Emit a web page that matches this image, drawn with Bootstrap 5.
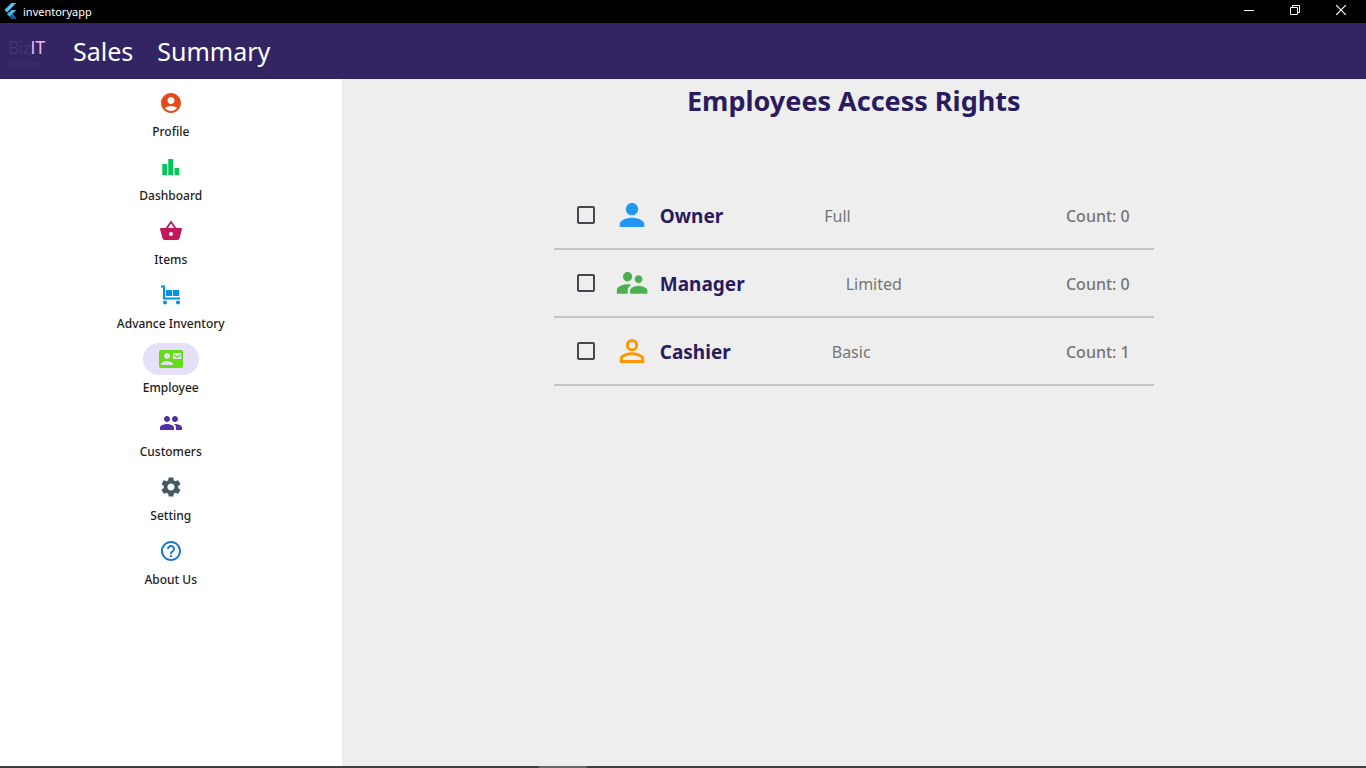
<!DOCTYPE html>
<html lang="en">
<head>
<meta charset="utf-8">
<meta name="viewport" content="width=device-width, initial-scale=1">
<title>inventoryapp</title>
<link href="https://cdn.jsdelivr.net/npm/bootstrap@5.3.0/dist/css/bootstrap.min.css" rel="stylesheet">
<style>
  body { font-family: "Noto Sans", "Open Sans", sans-serif; background: #eee; color: #1d1b20; }
  .window-bar { height: 23px; background: #000; color: #fff; font-size: 11px; line-height: 24px; padding: 0 2px 0 4px; }
  .window-bar .caption { width: 46px; height: 20px; line-height: 0; }
  .app-mark { margin: 3px 5px 0 0; }
  .app-bar { height: 56px; background: #332464; color: #fff; }
  .app-title { font-size: 25px; line-height: 32px; font-weight: 400; gap: 24px; }
  .brand-logo { width: 57px; font-size: 17px; line-height: 20px; font-family: Lato, sans-serif; color: #44356f; text-decoration: none; }
  .brand-logo b { font-weight: 400; color: #e8b8f0; }
  .brand-logo small { display: block; font-size: 8px; line-height: 10px; color: #41336e; }
  .side-nav { background: #fff; }
  .side-nav a { color: #1d1b20; text-decoration: none; font-size: 12px; line-height: 18px; font-weight: 500; height: 64px; gap: 4px; }
  .pill { width: 56px; height: 32px; }
  .active .pill { background: #e5dff9; }
  .page-title { font-size: 27px; line-height: 44px; font-weight: 700; color: #2a1b5f; }
  .rights-list { max-width: 600px; margin-top: 59px; }
  .rights-row { height: 68px; border-bottom: 2px solid #c5c5c5; padding: 0 24px 0 23px; color: #757575; font-size: 16px; line-height: 24px; }
  .rights-row .form-check-input { width: 18px; height: 18px; border: 2px solid #49454f; border-radius: 2px; background-color: transparent; margin: 0 21px 0 0; }
  .rights-row label, .rights-row span { padding-top: 2px; }
  .role { font-size: 19px; font-weight: 700; color: #2a1b5f; margin: 0 101px 0 12px; }
  .count { font-weight: 500; }
  .task-edge { height: 2px; background: #404040; }
  .task-edge div { width: 48px; height: 2px; margin-left: 539px; background: #686868; }
</style>
<script src="https://cdn.jsdelivr.net/npm/bootstrap@5.3.0/dist/js/bootstrap.bundle.min.js"></script>
</head>
<body class="d-flex flex-column min-vh-100">
<div class="window-bar d-flex align-items-start">
  <svg class="app-mark" width="14" height="17" viewBox="0 0 14 17" aria-hidden="true"><path d="M7.500 0h4.700L3 9.500.5 7z" fill="#54c5f8"/><path d="M7.500 7h4.700L8.500 11l3.700 4.500H7.500L3 11z" fill="#40b8f0"/><path d="M5.500 13.500 8 11l4.200 4.500H7.500z" fill="#0b5a9c"/></svg>
  <span class="flex-grow-1">inventoryapp</span>
  <button class="caption btn p-0 border-0" aria-label="Minimize"><svg width="10" height="10"><path d="M0 5.500h10" stroke="#fff"/></svg></button>
  <button class="caption btn p-0 border-0" aria-label="Restore"><svg width="10" height="10" fill="none" stroke="#fff"><path d="M.5 2.500h7v7h-7zM2.500 2V.5h7v7H8"/></svg></button>
  <button class="caption btn p-0 border-0" aria-label="Close"><svg width="10" height="10"><path d="m0 0 10 10M10 0 0 10" stroke="#fff" stroke-width="1.200"/></svg></button>
</div>
<header class="app-bar d-flex align-items-center">
  <a class="brand-logo ms-2 me-2 pt-1" href="#">Biz<b>IT</b><small>Solutions</small></a>
  <h1 class="app-title d-flex m-0"><span>Sales</span> <span>Summary</span></h1>
</header>
<div class="row g-0 flex-grow-1">
  <nav class="side-nav col-3 pt-2 d-flex flex-column align-items-center">
    <a class="d-flex flex-column align-items-center" href="#"><span class="pill rounded-pill d-flex align-items-center justify-content-center"><svg width="24" height="24" viewBox="0 0 24 24" fill="#e64a19"><path d="M12 2C6.480 2 2 6.480 2 12s4.480 10 10 10 10-4.480 10-10S17.520 2 12 2zm0 4c1.930 0 3.500 1.570 3.500 3.500S13.930 13 12 13s-3.500-1.570-3.500-3.500S10.070 6 12 6zm0 14c-2.030 0-4.430-.820-6.140-2.880C7.550 15.800 9.680 15 12 15s4.450.8 6.140 2.120C16.430 19.180 14.030 20 12 20z"/></svg></span>Profile</a>
    <a class="d-flex flex-column align-items-center" href="#"><span class="pill rounded-pill d-flex align-items-center justify-content-center"><svg width="24" height="24" viewBox="0 0 24 24" fill="#00c853"><path d="M3.300 9H8v11H3.300zM9.300 4h4.800v16H9.300zM15.500 13h4.700v7h-4.700z"/></svg></span>Dashboard</a>
    <a class="d-flex flex-column align-items-center" href="#"><span class="pill rounded-pill d-flex align-items-center justify-content-center"><svg width="24" height="24" viewBox="0 0 24 24" fill="#c2185b"><path d="M17.210 9l-4.380-6.560c-.190-.280-.510-.420-.830-.420-.320 0-.640.140-.830.430L6.790 9H2c-.550 0-1 .450-1 1 0 .090.010.180.040.270l2.540 9.270c.230.840 1 1.460 1.920 1.460h13c.920 0 1.690-.620 1.930-1.460l2.540-9.270L23 10c0-.550-.450-1-1-1h-4.790zM9 9l3-4.400L15 9H9zm3 8c-1.100 0-2-.9-2-2s.9-2 2-2 2 .9 2 2-.9 2-2 2z"/></svg></span>Items</a>
    <a class="d-flex flex-column align-items-center" href="#"><span class="pill rounded-pill d-flex align-items-center justify-content-center"><svg width="24" height="24" viewBox="0 0 24 24" fill="#0091ea"><path d="M2 2.500h4v12h15v2H4v-12H2zM7 7h6.200v6H7zM14 7h6.200v6H14z"/><circle cx="6" cy="19.500" r="2"/><circle cx="19" cy="19.500" r="2"/></svg></span>Advance Inventory</a>
    <a class="active d-flex flex-column align-items-center" href="#" aria-current="page"><span class="pill rounded-pill d-flex align-items-center justify-content-center"><svg width="26" height="24" viewBox="-1 0 26 24" fill="#64dd17"><path fill-rule="evenodd" d="M22 3H2C.9 3 0 3.900 0 5v14c0 1.100.9 2 2 2h20c1.100 0 2-.9 2-2V5c0-1.100-.9-2-2-2zM8 6c1.660 0 3 1.340 3 3s-1.340 3-3 3-3-1.340-3-3 1.340-3 3-3zm6 12H2v-1c0-2 4-3.100 6-3.100s6 1.100 6 3.100v1zm8.300-5.900h-8.300V6h8.300z"/><path d="m15 7.200 3.200 2.300 3.200-2.300v1.500l-3.200 2.200L15 8.700z"/></svg></span>Employee</a>
    <a class="d-flex flex-column align-items-center" href="#"><span class="pill rounded-pill d-flex align-items-center justify-content-center"><svg width="24" height="24" viewBox="0 0 24 24" fill="#512da8"><path d="M16 11c1.660 0 2.990-1.340 2.990-3S17.660 5 16 5c-1.660 0-3 1.340-3 3s1.340 3 3 3zm-8 0c1.660 0 2.990-1.340 2.990-3S9.660 5 8 5C6.340 5 5 6.340 5 8s1.340 3 3 3zm0 2c-2.330 0-7 1.170-7 3.500V19h14v-2.500c0-2.330-4.670-3.500-7-3.500zm8 0c-.290 0-.620.020-.970.050 1.160.840 1.970 1.970 1.970 3.450V19h6v-2.500c0-2.330-4.670-3.500-7-3.500z"/></svg></span>Customers</a>
    <a class="d-flex flex-column align-items-center" href="#"><span class="pill rounded-pill d-flex align-items-center justify-content-center"><svg width="24" height="24" viewBox="0 0 24 24" fill="#455a64"><path d="M19.140 12.940c.040-.3.060-.610.060-.940 0-.320-.020-.640-.070-.940l2.030-1.580c.180-.140.230-.410.120-.610l-1.920-3.320c-.120-.220-.370-.290-.590-.220l-2.390.960c-.5-.380-1.030-.7-1.620-.940l-.360-2.540c-.040-.240-.240-.410-.480-.410h-3.840c-.240 0-.430.170-.470.410l-.360 2.540c-.590.240-1.130.570-1.620.940l-2.390-.960c-.220-.080-.470 0-.590.220L2.740 8.870c-.120.210-.080.470.120.610l2.030 1.580c-.050.3-.090.630-.090.940s.020.640.070.940l-2.030 1.580c-.180.140-.230.410-.120.610l1.920 3.320c.120.220.370.290.590.220l2.390-.960c.5.380 1.030.7 1.620.940l.360 2.540c.050.240.240.410.480.410h3.840c.240 0 .440-.170.470-.410l.360-2.540c.590-.240 1.130-.560 1.620-.940l2.390.960c.220.080.470 0 .590-.220l1.920-3.320c.120-.220.070-.470-.120-.610l-2.010-1.580zM12 15.600c-1.980 0-3.600-1.620-3.600-3.600s1.620-3.600 3.600-3.600 3.600 1.620 3.600 3.600-1.620 3.600-3.600 3.600z"/></svg></span>Setting</a>
    <a class="d-flex flex-column align-items-center" href="#"><span class="pill rounded-pill d-flex align-items-center justify-content-center"><svg width="24" height="24" viewBox="0 0 24 24" fill="#1976d2"><path d="M11 18h2v-2h-2v2zm1-16C6.480 2 2 6.480 2 12s4.480 10 10 10 10-4.480 10-10S17.520 2 12 2zm0 18c-4.410 0-8-3.590-8-8s3.590-8 8-8 8 3.590 8 8-3.590 8-8 8zm0-14c-2.210 0-4 1.790-4 4h2c0-1.100.9-2 2-2s2 .9 2 2c0 2-3 1.750-3 5h2c0-2.250 3-2.500 3-5 0-2.210-1.790-4-4-4z"/></svg></span>About Us</a>
  </nav>
  <main class="col-9">
    <h2 class="page-title text-center m-0">Employees Access Rights</h2>
    <div class="rights-list mx-auto">
      <div class="rights-row d-flex align-items-center">
        <input class="form-check-input flex-shrink-0" type="checkbox" id="owner">
        <svg width="32" height="32" viewBox="0 0 24 24" fill="#2196f3"><path d="M12 12.200c2.500 0 4.600-2.060 4.600-4.600S14.500 3 12 3 7.400 5.060 7.400 7.600s2.100 4.600 4.600 4.600zm0 1.800c-3 0-9.200 1.500-9.200 4.600V21h18.400v-2.400c0-3.100-6.200-4.600-9.200-4.600z"/></svg>
        <label class="role" for="owner">Owner</label><span>Full</span><span class="count ms-auto">Count: 0</span>
      </div>
      <div class="rights-row d-flex align-items-center">
        <input class="form-check-input flex-shrink-0" type="checkbox" id="manager">
        <svg width="32" height="32" viewBox="0 0 24 24" fill="#4caf50"><path d="M16.900 12c1.600 0 2.900-1.300 2.900-2.900s-1.300-2.900-2.900-2.900S14 7.500 14 9.100s1.300 2.900 2.900 2.900zM8.700 10.800c1.900 0 3.400-1.600 3.400-3.500S10.600 3.800 8.700 3.800 5.300 5.400 5.300 7.300s1.500 3.500 3.400 3.500zM16.900 14.200c-2.100 0-6.300 1.100-6.300 3.200V20h12.900v-2.600c0-2.100-4.300-3.200-6.600-3.200zM8.700 13C6 13 .7 14.400.7 17.100V20h8.100v-2.600c0-1 .4-2.700 2.700-4.100-1-.2-2-.3-2.800-.3z"/></svg>
        <label class="role" for="manager">Manager</label><span>Limited</span><span class="count ms-auto">Count: 0</span>
      </div>
      <div class="rights-row d-flex align-items-center">
        <input class="form-check-input flex-shrink-0" type="checkbox" id="cashier">
        <svg width="32" height="32" viewBox="0 0 24 24" fill="#ff9800"><path fill-rule="evenodd" d="M12 3a4.600 4.600 0 1 0 0 9.200A4.600 4.600 0 0 0 12 3zm0 2.200a2.400 2.400 0 1 1 0 4.800 2.400 2.400 0 0 1 0-4.800zM12 13c-3 0-9.200 1.500-9.200 4.600V21h18.400v-3.400c0-3.100-6.200-4.600-9.200-4.600zm0 2.200c3.200 0 7 1.500 7 2.400v1.200H5v-1.200c0-.9 3.800-2.400 7-2.400z"/></svg>
        <label class="role" for="cashier">Cashier</label><span>Basic</span><span class="count ms-auto">Count: 1</span>
      </div>
    </div>
  </main>
</div>
<footer class="task-edge"><div></div></footer>
</body>
</html>
